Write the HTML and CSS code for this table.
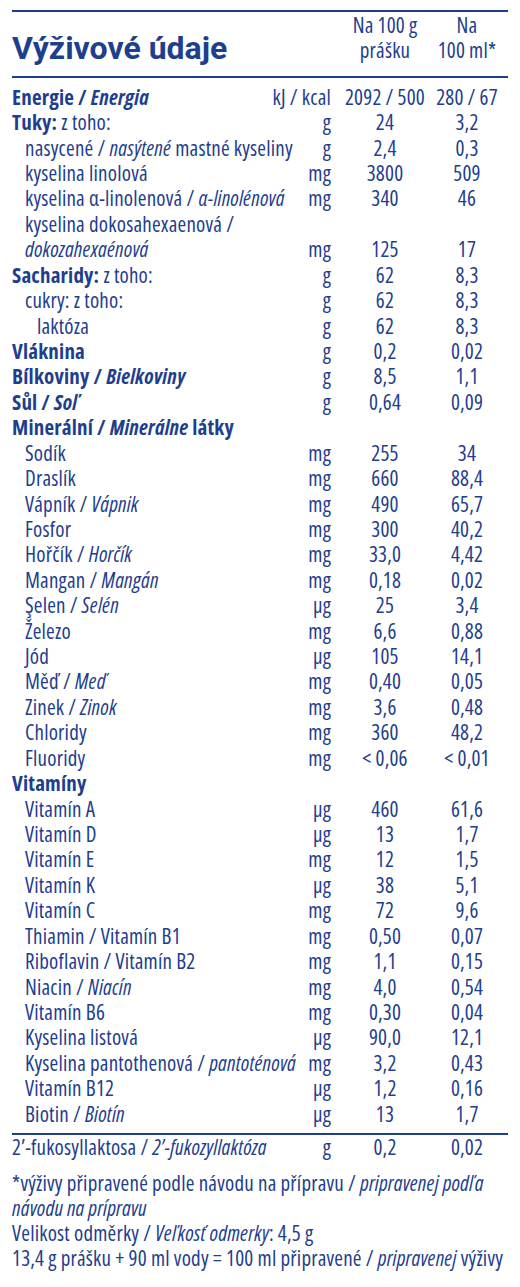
FILE: index.html
```html
<!DOCTYPE html>
<html lang="cs">
<head>
<meta charset="utf-8">
<title>Výživové údaje</title>
<link rel="stylesheet" href="styles.css">
</head>
<body>
<div class="panel">
  <div class="head">
    <h1 class="title">Výživové údaje</h1>
    <div class="colhead c3">Na 100 g<br>prášku</div>
    <div class="colhead c4">Na<br>100 ml*</div>
  </div>

  <div class="table">
    <div class="row main"><span class="lbl"><b>Energie / <i>Energia</i></b></span><span class="u">kJ / kcal</span><span class="v">2092 / 500</span><span class="v">280 / 67</span></div>
    <div class="row main"><span class="lbl"><b>Tuky:</b> z toho:</span><span class="u">g</span><span class="v">24</span><span class="v">3,2</span></div>
    <div class="row sub"><span class="lbl">nasycené / <i>nasýtené</i> mastné kyseliny</span><span class="u">g</span><span class="v">2,4</span><span class="v">0,3</span></div>
    <div class="row sub"><span class="lbl">kyselina linolová</span><span class="u">mg</span><span class="v">3800</span><span class="v">509</span></div>
    <div class="row sub"><span class="lbl">kyselina α-linolenová / <i>α-linolénová</i></span><span class="u">mg</span><span class="v">340</span><span class="v">46</span></div>
    <div class="row sub"><span class="lbl">kyselina dokosahexaenová /</span></div>
    <div class="row sub"><span class="lbl"><i>dokozahexaénová</i></span><span class="u">mg</span><span class="v">125</span><span class="v">17</span></div>
    <div class="row main"><span class="lbl"><b>Sacharidy:</b> z toho:</span><span class="u">g</span><span class="v">62</span><span class="v">8,3</span></div>
    <div class="row sub"><span class="lbl">cukry: z toho:</span><span class="u">g</span><span class="v">62</span><span class="v">8,3</span></div>
    <div class="row sub2"><span class="lbl">laktóza</span><span class="u">g</span><span class="v">62</span><span class="v">8,3</span></div>
    <div class="row main"><span class="lbl"><b>Vláknina</b></span><span class="u">g</span><span class="v">0,2</span><span class="v">0,02</span></div>
    <div class="row main"><span class="lbl"><b>Bílkoviny / <i>Bielkoviny</i></b></span><span class="u">g</span><span class="v">8,5</span><span class="v">1,1</span></div>
    <div class="row main"><span class="lbl"><b>Sůl / <i>Soľ</i></b></span><span class="u">g</span><span class="v">0,64</span><span class="v">0,09</span></div>
    <div class="row main"><span class="lbl"><b>Minerální / <i>Minerálne</i> látky</b></span></div>
    <div class="row sub"><span class="lbl">Sodík</span><span class="u">mg</span><span class="v">255</span><span class="v">34</span></div>
    <div class="row sub"><span class="lbl">Draslík</span><span class="u">mg</span><span class="v">660</span><span class="v">88,4</span></div>
    <div class="row sub"><span class="lbl">Vápník / <i>Vápnik</i></span><span class="u">mg</span><span class="v">490</span><span class="v">65,7</span></div>
    <div class="row sub"><span class="lbl">Fosfor</span><span class="u">mg</span><span class="v">300</span><span class="v">40,2</span></div>
    <div class="row sub"><span class="lbl">Hořčík / <i>Horčík</i></span><span class="u">mg</span><span class="v">33,0</span><span class="v">4,42</span></div>
    <div class="row sub"><span class="lbl">Mangan / <i>Mangán</i></span><span class="u">mg</span><span class="v">0,18</span><span class="v">0,02</span></div>
    <div class="row sub"><span class="lbl">Şelen / <i>Selén</i></span><span class="u">µg</span><span class="v">25</span><span class="v">3,4</span></div>
    <div class="row sub"><span class="lbl">Železo</span><span class="u">mg</span><span class="v">6,6</span><span class="v">0,88</span></div>
    <div class="row sub"><span class="lbl">Jód</span><span class="u">µg</span><span class="v">105</span><span class="v">14,1</span></div>
    <div class="row sub"><span class="lbl">Měď / <i>Meď</i></span><span class="u">mg</span><span class="v">0,40</span><span class="v">0,05</span></div>
    <div class="row sub"><span class="lbl">Zinek / <i>Zinok</i></span><span class="u">mg</span><span class="v">3,6</span><span class="v">0,48</span></div>
    <div class="row sub"><span class="lbl">Chloridy</span><span class="u">mg</span><span class="v">360</span><span class="v">48,2</span></div>
    <div class="row sub"><span class="lbl">Fluoridy</span><span class="u">mg</span><span class="v">&lt; 0,06</span><span class="v">&lt; 0,01</span></div>
    <div class="row main"><span class="lbl"><b>Vitamíny</b></span></div>
    <div class="row sub"><span class="lbl">Vitamín A</span><span class="u">µg</span><span class="v">460</span><span class="v">61,6</span></div>
    <div class="row sub"><span class="lbl">Vitamín D</span><span class="u">µg</span><span class="v">13</span><span class="v">1,7</span></div>
    <div class="row sub"><span class="lbl">Vitamín E</span><span class="u">mg</span><span class="v">12</span><span class="v">1,5</span></div>
    <div class="row sub"><span class="lbl">Vitamín K</span><span class="u">µg</span><span class="v">38</span><span class="v">5,1</span></div>
    <div class="row sub"><span class="lbl">Vitamín C</span><span class="u">mg</span><span class="v">72</span><span class="v">9,6</span></div>
    <div class="row sub"><span class="lbl">Thiamin / Vitamín B1</span><span class="u">mg</span><span class="v">0,50</span><span class="v">0,07</span></div>
    <div class="row sub"><span class="lbl">Riboflavin / Vitamín B2</span><span class="u">mg</span><span class="v">1,1</span><span class="v">0,15</span></div>
    <div class="row sub"><span class="lbl">Niacin / <i>Niacín</i></span><span class="u">mg</span><span class="v">4,0</span><span class="v">0,54</span></div>
    <div class="row sub"><span class="lbl">Vitamín B6</span><span class="u">mg</span><span class="v">0,30</span><span class="v">0,04</span></div>
    <div class="row sub"><span class="lbl">Kyselina listová</span><span class="u">µg</span><span class="v">90,0</span><span class="v">12,1</span></div>
    <div class="row sub"><span class="lbl">Kyselina pantothenová / <i>pantoténová</i></span><span class="u">mg</span><span class="v">3,2</span><span class="v">0,43</span></div>
    <div class="row sub"><span class="lbl">Vitamín B12</span><span class="u">µg</span><span class="v">1,2</span><span class="v">0,16</span></div>
    <div class="row sub"><span class="lbl">Biotin / <i>Biotín</i></span><span class="u">µg</span><span class="v">13</span><span class="v">1,7</span></div>
  </div>

  <div class="extra">
    <div class="row main"><span class="lbl">2’-fukosyllaktosa / <i>2’-fukozyllaktóza</i></span><span class="u">g</span><span class="v">0,2</span><span class="v">0,02</span></div>
  </div>

  <div class="notes">
    <p class="note">*výživy připravené podle návodu na přípravu / <i>pripravenej podľa<br>návodu na prípravu</i></p>
    <p class="note">Velikost odměrky / <i>Veľkosť odmerky</i>: 4,5 g</p>
    <p class="note">13,4 g prášku + 90 ml vody = 100 ml připravené / <i>pripravenej</i> výživy</p>
  </div>
</div>
</body>
</html>
```

FILE: styles.css
```css
html, body {
  margin: 0;
  padding: 0;
  background: #ffffff;
}

body {
  color: #1e3e8e;
  font-family: "Open Sans", "Roboto", sans-serif;
  font-stretch: 75%;
  font-weight: 500;
  font-size: 21px;
  letter-spacing: 0.2px;
}

.panel {
  width: 496px;
  margin: 10px 12px 0 12px;
  border-top: 2px solid #1e3e8e;
}

.head {
  display: grid;
  grid-template-columns: minmax(0, 1fr) 40px 108px 56px;
  padding: 1.3px 13px 12.7px 0;
  border-bottom: 2.5px solid #1e3e8e;
  line-height: 25px;
}

.title {
  grid-column: 1 / 3;
  align-self: end;
  margin: 0 0 2.6px 0;
  font-family: "Roboto", "Liberation Sans", sans-serif;
  font-stretch: 100%;
  font-weight: 700;
  font-size: 32px;
  line-height: 25px;
  letter-spacing: 0;
  white-space: nowrap;
}

.colhead {
  justify-self: center;
  text-align: center;
  white-space: nowrap;
}

.table {
  padding: 6.8px 0 5.7px 0;
  border-bottom: 2.5px solid #1e3e8e;
}

.row {
  display: grid;
  grid-template-columns: minmax(0, 1fr) 40px 108px 56px;
  padding-right: 13px;
  line-height: 25.415px;
  white-space: nowrap;
}

.lbl {
  grid-column: 1;
}

.sub .lbl { padding-left: 13px; }
.sub2 .lbl { padding-left: 25px; }

.u {
  grid-column: 2;
  justify-self: end;
  text-align: right;
}

.v {
  justify-self: center;
  text-align: center;
}

b { font-weight: 700; }

.extra {
  padding-top: 0;
}

.notes {
  margin-top: 10.4px;
}

.note {
  margin: 0;
  line-height: 25px;
  white-space: nowrap;
}
```
